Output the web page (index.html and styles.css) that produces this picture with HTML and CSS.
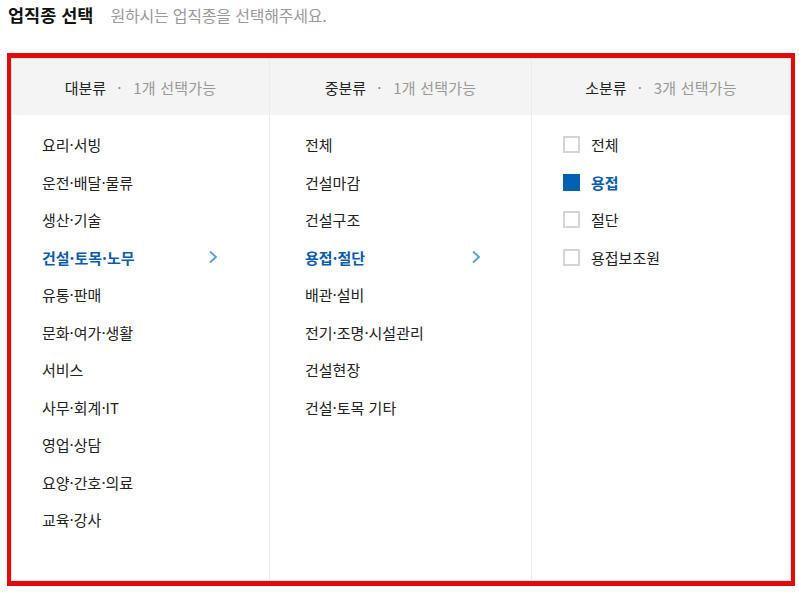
FILE: index.html
```html
<!DOCTYPE html>
<html lang="ko">
<head>
<meta charset="utf-8">
<link rel="stylesheet" href="styles.css">
</head>
<body>
<div class="title-row">
  <h1 class="title">업직종 선택</h1>
  <span class="subtitle">원하시는 업직종을 선택해주세요.</span>
</div>
<div class="highlight">
  <div class="panel">
    <div class="col col1">
      <div class="col-head"><span class="head-name">대분류</span><span class="head-dot">·</span><span class="head-note">1개 선택가능</span></div>
      <ul class="list">
        <li class="item">요리·서빙</li>
        <li class="item">운전·배달·물류</li>
        <li class="item">생산·기술</li>
        <li class="item active">건설·토목·노무<svg class="chev" width="10" height="14" viewBox="0 0 10 14"><path d="M2 1.5 L8 7 L2 12.5" fill="none" stroke="#5b9bd8" stroke-width="1.8"/></svg></li>
        <li class="item">유통·판매</li>
        <li class="item">문화·여가·생활</li>
        <li class="item">서비스</li>
        <li class="item">사무·회계·IT</li>
        <li class="item">영업·상담</li>
        <li class="item">요양·간호·의료</li>
        <li class="item">교육·강사</li>
      </ul>
    </div>
    <div class="col col2">
      <div class="col-head"><span class="head-name">중분류</span><span class="head-dot">·</span><span class="head-note">1개 선택가능</span></div>
      <ul class="list">
        <li class="item">전체</li>
        <li class="item">건설마감</li>
        <li class="item">건설구조</li>
        <li class="item active">용접·절단<svg class="chev" width="10" height="14" viewBox="0 0 10 14"><path d="M2 1.5 L8 7 L2 12.5" fill="none" stroke="#5b9bd8" stroke-width="1.8"/></svg></li>
        <li class="item">배관·설비</li>
        <li class="item">전기·조명·시설관리</li>
        <li class="item">건설현장</li>
        <li class="item">건설·토목 기타</li>
      </ul>
    </div>
    <div class="col col3">
      <div class="col-head"><span class="head-name">소분류</span><span class="head-dot">·</span><span class="head-note">3개 선택가능</span></div>
      <ul class="list">
        <li class="item check-item"><span class="box"></span>전체</li>
        <li class="item check-item checked"><span class="box"></span>용접</li>
        <li class="item check-item"><span class="box"></span>절단</li>
        <li class="item check-item"><span class="box"></span>용접보조원</li>
      </ul>
    </div>
  </div>
</div>
</body>
</html>
```
FILE: styles.css
```css
* { box-sizing: border-box; }
html, body { margin: 0; padding: 0; background: #fff; }
body {
  font-family: "Malgun Gothic", "Noto Sans CJK KR", "Noto Sans", sans-serif;
  color: #222;
  width: 799px;
  height: 594px;
  overflow: hidden;
}
.title-row {
  display: flex;
  align-items: baseline;
  gap: 17px;
  padding: 0 8px;
  height: 53px;
}
.title {
  margin: 0;
  font-size: 17.5px;
  line-height: 29px;
  font-weight: 700;
  color: #111;
}
.subtitle {
  font-size: 16px;
  color: #999;
  letter-spacing: -0.2px;
}
.highlight {
  margin: 0 4px 0 7px;
  border-style: solid;
  border-color: #e20b0b;
  border-width: 5px 4px 5px 4px;
  height: 533px;
}
.panel {
  display: grid;
  grid-template-columns: 257px 262px 1fr;
  height: 100%;
  border: 1px solid #e4e4e4;
}
.col + .col { border-left: 1px solid #ebebeb; }
.col-head {
  height: 56px;
  background: #f4f4f4;
  display: flex;
  align-items: center;
  justify-content: center;
  font-size: 15px;
}
.head-name { color: #222; }
.head-dot { color: #888; margin: 0 12px 0 11px; }
.head-note { color: #999; letter-spacing: 0.2px; }
.list {
  list-style: none;
  margin: 0;
  padding: 11px 0 0 0;
}
.item {
  height: 37.5px;
  display: flex;
  align-items: center;
  justify-content: space-between;
  font-size: 15px;
  color: #222;
}
.col1 .item { padding: 0 51px 0 30px; }
.col2 .item { padding: 0 50px 0 35px; }
.col3 .item { padding: 0 0 0 31px; justify-content: flex-start; }
.item.active { color: #0b5cad; font-weight: 700; }
.chev { display: block; }
.box {
  width: 17px;
  height: 17px;
  border: 2px solid #d4d4d4;
  margin-right: 11px;
  flex: none;
}
.checked .box { background: #0062b1; border-color: #0062b1; }
.checked { color: #0b5cad; font-weight: 700; }
```
